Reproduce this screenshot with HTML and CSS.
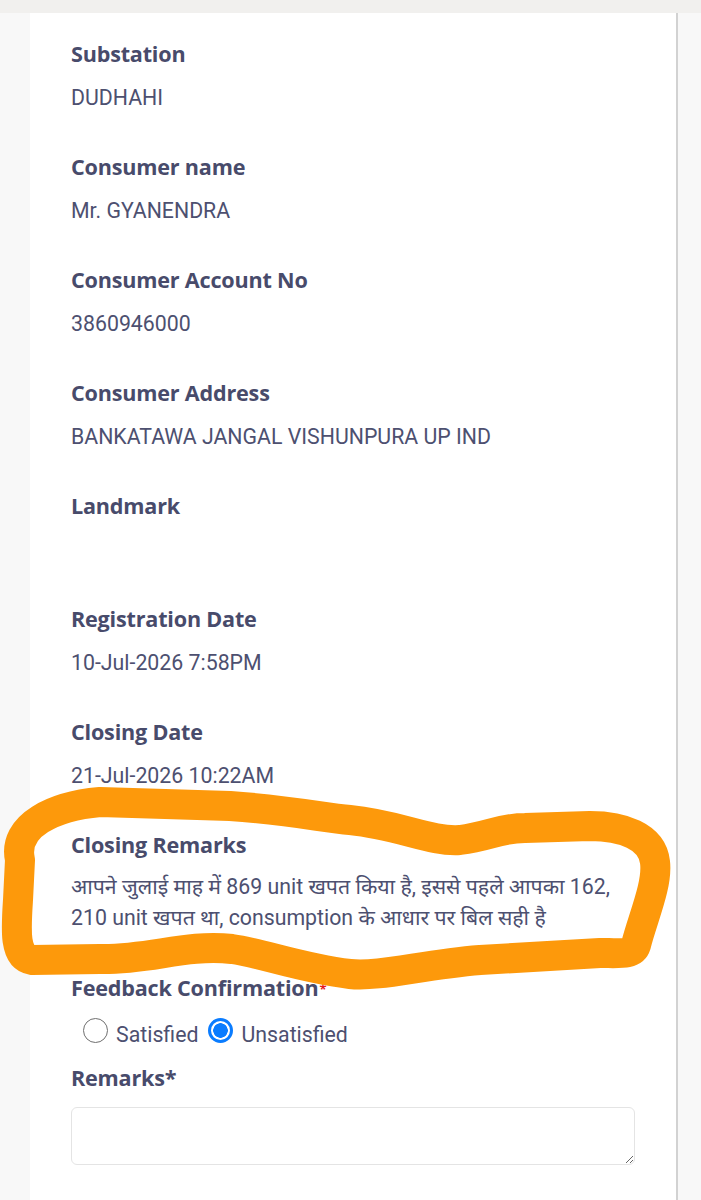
FILE: index.html
```html
<!DOCTYPE html>
<html lang="hi">
<head>
<meta charset="utf-8">
<title>Complaint details</title>
<link rel="stylesheet" href="styles.css">
</head>
<body>
<div class="topbar"></div>
<div class="page">
  <div class="card">
    <div class="field">
      <div class="label">Substation</div>
      <div class="value">DUDHAHI</div>
    </div>
    <div class="field">
      <div class="label">Consumer name</div>
      <div class="value">Mr. GYANENDRA</div>
    </div>
    <div class="field">
      <div class="label">Consumer Account No</div>
      <div class="value">3860946000</div>
    </div>
    <div class="field">
      <div class="label">Consumer Address</div>
      <div class="value">BANKATAWA JANGAL VISHUNPURA UP IND</div>
    </div>
    <div class="field">
      <div class="label">Landmark</div>
      <div class="value">&nbsp;</div>
    </div>
    <div class="field">
      <div class="label">Registration Date</div>
      <div class="value">10-Jul-2026 7:58PM</div>
    </div>
    <div class="field">
      <div class="label">Closing Date</div>
      <div class="value">21-Jul-2026 10:22AM</div>
    </div>
    <div class="field">
      <div class="label">Closing Remarks</div>
      <div class="value remarks-text">आपने जुलाई माह में 869 unit खपत किया है, इससे पहले आपका 162, 210 unit खपत था, consumption के आधार पर बिल सही है</div>
    </div>
    <div class="form-group">
      <div class="label">Feedback Confirmation<span class="req">*</span></div>
      <div class="radios">
        <label class="radio"><input type="radio" name="fb" value="s"><span>Satisfied</span></label>
        <label class="radio"><input type="radio" name="fb" value="u" checked><span>Unsatisfied</span></label>
      </div>
    </div>
    <div class="form-group">
      <div class="label">Remarks*</div>
      <textarea class="textbox"></textarea>
    </div>
  </div>
  <div class="rail"></div>
</div>
<svg class="scribble" width="701" height="1200" viewBox="0 0 701 1200" aria-hidden="true">
  <path d="M20,860 C12,825 55,806 100,802 L230,806 C290,810 325,818 350,820 C400,825 430,842 460,840 C490,836 500,828 525,828 L590,826 C622,826 652,836 655,862 C658,885 642,920 636,945 C633,955 620,953 600,953 L480,960 C420,965 380,977 350,974 C300,968 262,953 232,949 C185,944 150,960 100,959 L32,960 C14,957 16,930 18,900 Z" fill="none" stroke="#fd990b" stroke-width="30" stroke-linejoin="round" stroke-linecap="round"/>
</svg>
</body>
</html>
```
FILE: styles.css
```css
html, body {
  margin: 0;
  padding: 0;
}
body {
  background: #f8f8f8;
  position: relative;
  width: 701px;
  min-height: 1200px;
  overflow: hidden;
}
.topbar {
  height: 13px;
  background: #f1f0ee;
}
.page {
  display: flex;
  min-height: 1187px;
}
.card {
  margin-left: 30px;
  width: 605px;
  background: #ffffff;
  padding: 27px 0 40px 41px;
  border-right: 2px solid #d2d2d2;
}
.rail {
  flex: 1;
}
.field {
  margin-bottom: 41px;
}
.label {
  font-family: "Open Sans", "Noto Sans", sans-serif;
  font-weight: 700;
  font-size: 21.6px;
  line-height: 28px;
  color: #484b6b;
  letter-spacing: -0.2px;
}
.value {
  margin-top: 16px;
  font-family: Roboto, "Noto Sans", sans-serif;
  font-size: 21.3px;
  line-height: 28px;
  color: #4d5070;
}
.remarks-text {
  margin-top: 12px;
  line-height: 31px;
  width: 560px;
}
.req {
  color: #e41c1c;
  font-size: 13px;
  font-weight: 700;
  line-height: 0;
  position: relative;
  top: -2px;
  margin-left: 1px;
}
.form-group {
  margin-bottom: 14px;
}
.radios {
  display: flex;
  align-items: center;
  margin-top: 14px;
  margin-bottom: 20px;
  padding-left: 12px;
  height: 28px;
  font-family: Roboto, "Noto Sans", sans-serif;
  font-size: 21.3px;
  color: #4d5070;
}
.radio {
  display: flex;
  align-items: center;
  margin-right: 10px;
}
.radio span {
  margin-left: 8px;
  position: relative;
  top: 4px;
}
.radio input {
  appearance: none;
  -webkit-appearance: none;
  margin: 0;
  width: 25px;
  height: 25px;
  border-radius: 50%;
  border: 1.5px solid #6f6f6f;
  background: #fff;
  box-sizing: border-box;
}
.radio input:checked {
  border: 3px solid #0a7cff;
  background: radial-gradient(circle, #0a7cff 0 7px, #ffffff 7.5px);
}
.textbox {
  display: block;
  margin-top: 15px;
  width: 564px;
  height: 58px;
  box-sizing: border-box;
  border: 1.5px solid #e4e4e4;
  border-radius: 6px;
  background: #fff;
  resize: vertical;
  font-family: Roboto, sans-serif;
  font-size: 18px;
}
.scribble {
  position: absolute;
  top: 0;
  left: 0;
  pointer-events: none;
}
```
